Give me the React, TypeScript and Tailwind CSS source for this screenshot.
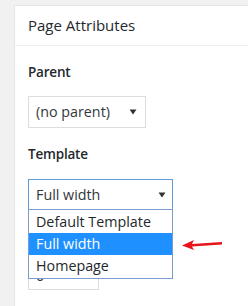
import React from "react";

const Arrow = () => (
  <svg width="10" height="6" viewBox="0 0 10 6" className="block">
    <path d="M1.5 0.5 L8.5 0.5 L5 5.5 Z" fill="#333" />
  </svg>
);

export default function App() {
  return (
    <div
      className="w-[248px] h-[306px] bg-[#f1f1f1] pt-[5px] pl-[14px] overflow-hidden relative"
      style={{ fontFamily: '"Open Sans", "Noto Sans", sans-serif' }}
    >
      <div className="bg-white border-l border-t border-[#e5e5e5] h-full text-[#23282d]">
        <div className="h-[40px] border-b border-[#eeeeee] pl-[13px] flex items-center text-[15px]">
          Page Attributes
        </div>
        <div className="pl-[13px] pt-[16px] text-[14.3px]">
          <div className="font-semibold leading-[20px] text-[13.5px] tracking-[-0.2px]">Parent</div>
          <div className="mt-[14px] w-[118px] h-[32px] border border-[#dddddd] flex items-center justify-between pl-[7px] pr-[7px] text-[#32373c]">
            <span>(no parent)</span>
            <Arrow />
          </div>
          <div className="mt-[16px] font-semibold leading-[20px] text-[13.5px] tracking-[-0.2px]">Template</div>
          <div className="mt-[15px] w-[145px] h-[32px] border border-[#5b9dd9] flex items-center justify-between pl-[7px] pr-[5px] text-[#32373c]">
            <span>Full width</span>
            <Arrow />
          </div>
          <div className="mt-[16px] h-[20px]" />
          <div className="mt-[15px] w-[71px] h-[28px] border border-[#dddddd] flex items-center pl-[7px] text-[#32373c]">
            0
          </div>
        </div>
      </div>
      <div className="absolute left-[28px] top-[209px] w-[145px] border border-[#7a9cd3] bg-white text-[#23282d] text-[14.3px] py-[1px]">
        <div className="h-[22px] leading-[22px] pl-[7px]">Default Template</div>
        <div className="h-[22px] leading-[22px] pl-[7px] bg-[#1e90ff] text-white">Full width</div>
        <div className="h-[22px] leading-[22px] pl-[7px]">Homepage</div>
      </div>
      <svg className="absolute left-[180px] top-[237px]" width="46" height="14" viewBox="0 0 46 14">
        <path d="M2 8.5 L14 3 L12 7 L42 5 L42 7.5 L12 9.5 L14 13 Z" fill="#e8141b" />
      </svg>
    </div>
  );
}
